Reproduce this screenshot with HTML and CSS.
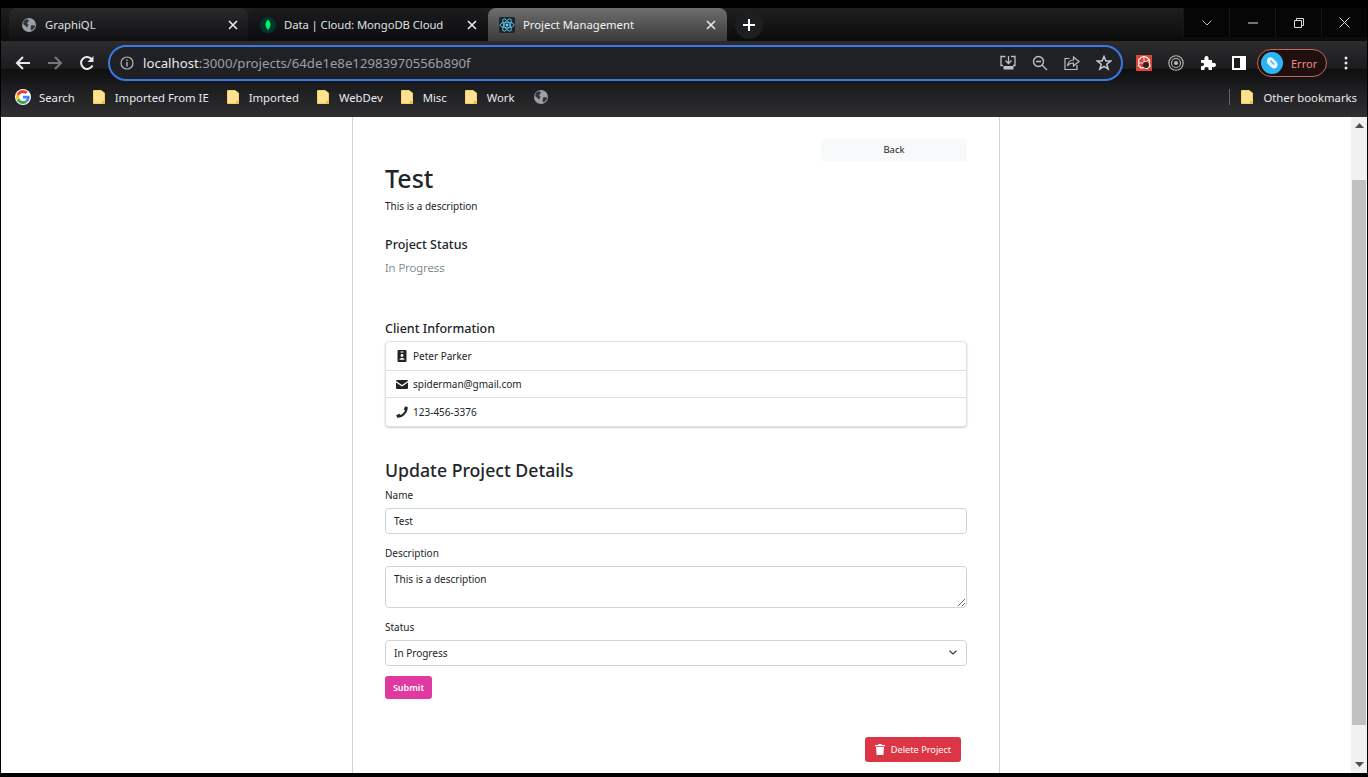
FILE: index.html
```html
<!DOCTYPE html>
<html lang="en">
<head>
	<meta charset="UTF-8" />
	<title>Project Management</title>
	<link rel="stylesheet" href="styles.css">
</head>
<body>
	<svg class="defs" width="0" height="0">
		<symbol id="globe" viewBox="0 0 16 16">
			<circle cx="8" cy="8" r="7" fill="#9aa0a6" />
			<path d="M3 3.500 6.500 2 8 4 6 6 7.500 8 6 10.500 4.500 9 2 7ZM10 8.500l3.500-.5.5 2-3 3.500-1.500-1.500Z" fill="#35363a" />
		</symbol>
		<symbol id="folder" viewBox="0 0 12 14">
			<path d="M.5.500H8L11.500 3v10.500H.5Z" fill="#fde293" stroke="#f9cf5b" />
			<path d="M9 11h2.500v2.500H9Z" fill="#e9b93f" />
		</symbol>
		<symbol id="close" viewBox="0 0 10 10">
			<path d="M1 1 9 9M9 1 1 9" stroke="#e8eaed" stroke-width="1.600" fill="none" />
		</symbol>
	</svg>

	<!-- tab strip -->
	<div class="tabstrip">
		<div class="tab">
			<svg class="favicon"><use href="#globe" /></svg>
			<span class="tab-title">GraphiQL</span>
			<svg class="tab-close"><use href="#close" /></svg>
		</div>
		<div class="tab tab-sep">
			<svg class="favicon" viewBox="0 0 16 16">
				<circle cx="8" cy="8" r="8" fill="#023430" />
				<path d="M8 2.500C10 4.500 11 6.500 10.500 8.500 10 10.500 9 11.500 8.300 12.500L8 14 7.700 12.500C7 11.500 6 10.500 5.500 8.500 5 6.500 6 4.500 8 2.500Z" fill="#00ed64" />
			</svg>
			<span class="tab-title">Data | Cloud: MongoDB Cloud</span>
			<svg class="tab-close"><use href="#close" /></svg>
		</div>
		<div class="tab tab-active">
			<svg class="favicon" viewBox="0 0 16 16">
				<rect width="16" height="16" rx="2" fill="#20232a" />
				<g fill="none" stroke="#61dafb" stroke-width=".8">
					<ellipse cx="8" cy="8" rx="7" ry="2.800" />
					<ellipse cx="8" cy="8" rx="7" ry="2.800" transform="rotate(60 8 8)" />
					<ellipse cx="8" cy="8" rx="7" ry="2.800" transform="rotate(120 8 8)" />
				</g>
				<circle cx="8" cy="8" r="1.400" fill="#61dafb" />
			</svg>
			<span class="tab-title">Project Management</span>
			<svg class="tab-close"><use href="#close" /></svg>
		</div>
		<div class="new-tab">
			<svg width="12" height="12" viewBox="0 0 12 12"><path d="M6 0V12M0 6H12" stroke="#fff" stroke-width="2" /></svg>
		</div>
		<div class="window-btns">
			<div class="window-btn">
				<svg width="10" height="6" viewBox="0 0 10 6"><path d="M.5.500 5 5 9.500.500" fill="none" stroke="#bbb" /></svg>
			</div>
			<div class="window-btn">
				<svg width="10" height="2" viewBox="0 0 10 2"><path d="M0 1H10" stroke="#ddd" /></svg>
			</div>
			<div class="window-btn">
				<svg width="10" height="10" viewBox="0 0 10 10"><path d="M.5 2.500H7.500V9.500H.5ZM2.500 2.500V.5H9.500V7.500H7.500" fill="none" stroke="#ddd" /></svg>
			</div>
			<div class="window-btn">
				<svg width="11" height="11" viewBox="0 0 11 11"><path d="M.5.500 10.500 10.500M10.500.500 .5 10.500" stroke="#ddd" /></svg>
			</div>
		</div>
	</div>

	<!-- toolbar -->
	<div class="toolbar">
		<svg class="nav-icon" viewBox="0 0 16 16"><path d="M15 8H2M8 2 2 8l6 6" fill="none" stroke="#e8eaed" stroke-width="2" /></svg>
		<svg class="nav-icon" viewBox="0 0 16 16"><path d="M1 8H14M8 2l6 6-6 6" fill="none" stroke="#75787c" stroke-width="2" /></svg>
		<svg class="nav-icon" viewBox="0 0 16 16"><path d="M13.500 10.500A6 6 0 1 1 13 4.500" fill="none" stroke="#e8eaed" stroke-width="2" /><path d="M14.500 1V7H8.500Z" fill="#e8eaed" /></svg>
		<div class="omnibox">
			<svg class="info-icon" viewBox="0 0 14 14"><circle cx="7" cy="7" r="6" fill="none" stroke="#b4b6b9" stroke-width="1.200" /><path d="M7 6V10.500M7 3.500V5" stroke="#b4b6b9" stroke-width="1.400" /></svg>
			<span class="url"><b>localhost</b>:3000/projects/64de1e8e12983970556b890f</span>
			<div class="omni-icons">
				<svg class="omni-icon" viewBox="0 0 16 16"><path d="M5.500 1.500H1V10.500H3M11 1.500H15V10.500H13M8.500 1V8.500M5.500 5.500 8.500 8.500 11.500 5.500" fill="none" stroke="#bdc1c6" stroke-width="1.300" /><rect x="3.500" y="11" width="10" height="3.500" fill="#bdc1c6" /></svg>
				<svg class="omni-icon" viewBox="0 0 16 16"><circle cx="6.500" cy="6.500" r="5" fill="none" stroke="#bdc1c6" stroke-width="1.400" /><path d="M10 10 15 15M4 6.500H9" stroke="#bdc1c6" stroke-width="1.400" /></svg>
				<svg class="omni-icon" viewBox="0 0 16 16"><path d="M5.500 3.500H1V14.500H13V10M9.500 2V5C5.500 5 4 7.500 3.500 11 5 8.500 7 8 9.500 8V11L15 6.500Z" fill="none" stroke="#bdc1c6" stroke-width="1.200" /></svg>
				<svg class="omni-icon" viewBox="0 0 16 16"><path d="M8 1.500 9.900 6H14.700L10.800 9.200 12.200 14 8 11.300 3.800 14 5.200 9.200 1.300 6H6.100Z" fill="none" stroke="#c4c7cb" stroke-width="1.500" /></svg>
			</div>
		</div>
		<div class="ext-icons">
			<svg class="ext-icon" viewBox="0 0 16 16">
				<rect width="16" height="16" fill="#d9453a" />
				<path d="M5 2.500 8 1.500 11 2.500 13.500 5 13 8 14 11 11 13.500 8 12.500 5 13 2.500 10.500 3 8 2.500 5Z" fill="none" stroke="#fff" stroke-width="1.200" />
				<path d="M8 1.500V7M3 8H8M13.500 5 8 7" stroke="#fff" stroke-width=".8" />
				<circle cx="10" cy="10" r="3" fill="#35201f" />
			</svg>
			<svg class="ext-icon" viewBox="0 0 16 16"><circle cx="8" cy="8" r="7.200" fill="none" stroke="#bbb" stroke-width="1.100" /><circle cx="8" cy="8" r="4.500" fill="none" stroke="#bbb" stroke-width="1.100" /><circle cx="8" cy="8" r="2" fill="#bbb" /></svg>
			<svg class="ext-icon" viewBox="0 0 16 16"><path d="M1 5H4.500C4 2.500 5 1 6.500 1S9 2.500 8.500 5H12V8C14.500 7.500 16 8.500 16 10S14.500 12.500 12 12V15H8.500C9 13 8 12 6.500 12S4 13 4.500 15H1V11C3 11.500 4 10.500 4 9.500S3 7.500 1 8Z" fill="#fff" /></svg>
			<svg class="ext-icon panel-icon" viewBox="0 0 14 14"><path d="M0 0H14V14H0Z" fill="#fff" /><path d="M2 2H8V12H2Z" fill="#1a1a1c" /></svg>
		</div>
		<div class="profile">
			<svg class="avatar" viewBox="0 0 22 22"><circle cx="11" cy="11" r="11" fill="#2cb5f5" /><path d="M6 8.500C6 6 8.500 4.500 10.500 5.500L12 6.500 15.500 10C17.500 12 16.500 16 13.500 16.500 12 16.700 11 16 10 15L6.500 11.500C6 10.500 6 9.500 6 8.500Z" fill="#eef8fe" /><path d="M9.500 8.500 13 12.500" stroke="#5cb8e6" stroke-width="1.600" /></svg>
			<span class="profile-text">Error</span>
		</div>
		<svg class="menu-icon" width="4" height="14" viewBox="0 0 4 14"><circle cx="2" cy="2" r="1.500" fill="#e8eaed" /><circle cx="2" cy="7" r="1.500" fill="#e8eaed" /><circle cx="2" cy="12" r="1.500" fill="#e8eaed" /></svg>
	</div>

	<!-- bookmarks -->
	<div class="bookmarks">
		<div class="bookmark bookmark-search">
			<svg class="bm-icon" viewBox="0 0 16 16">
				<circle cx="8" cy="8" r="8" fill="#fff" />
				<path d="M14.600 8.200C14.600 7.700 14.500 7.200 14.400 6.800H8V9.400H11.700C11.500 10.200 11 10.900 10.300 11.400L12.500 13.100C13.800 11.900 14.600 10.200 14.600 8.200Z" fill="#4285f4" />
				<path d="M8 15C9.900 15 11.400 14.400 12.500 13.100L10.300 11.400C9.700 11.800 8.900 12.100 8 12.100 6.200 12.100 4.600 10.900 4.100 9.200L1.800 11C2.900 13.400 5.300 15 8 15Z" fill="#34a853" />
				<path d="M4.100 9.200C3.800 8.400 3.800 7.600 4.100 6.800L1.800 5C.9 6.900.9 9.100 1.800 11Z" fill="#fbbc05" />
				<path d="M8 3.900C9 3.900 9.900 4.200 10.600 4.900L12.600 2.900C11.400 1.700 9.800 1 8 1 5.300 1 2.900 2.600 1.800 5L4.100 6.800C4.600 5.100 6.200 3.900 8 3.900Z" fill="#ea4335" />
			</svg>
			<span>Search</span>
		</div>
		<div class="bookmark"><svg class="folder-icon"><use href="#folder" /></svg><span>Imported From IE</span></div>
		<div class="bookmark"><svg class="folder-icon"><use href="#folder" /></svg><span>Imported</span></div>
		<div class="bookmark"><svg class="folder-icon"><use href="#folder" /></svg><span>WebDev</span></div>
		<div class="bookmark"><svg class="folder-icon"><use href="#folder" /></svg><span>Misc</span></div>
		<div class="bookmark"><svg class="folder-icon"><use href="#folder" /></svg><span>Work</span></div>
		<svg class="bm-icon"><use href="#globe" /></svg>
		<div class="bookmark-end">
			<div class="bm-divider"></div>
			<div class="bookmark"><svg class="folder-icon"><use href="#folder" /></svg><span>Other bookmarks</span></div>
		</div>
	</div>

	<!-- page -->
	<div class="viewport">
		<div class="page">
			<main class="column">
				<div class="back-row"><a class="btn-back">Back</a></div>
				<h1 class="title">Test</h1>
				<p class="desc">This is a description</p>
				<h5 class="section-head status-head">Project Status</h5>
				<p class="status">In Progress</p>
				<h5 class="section-head client-head">Client Information</h5>
				<ul class="client-list">
					<li>
						<svg class="li-icon" viewBox="0 0 12 12"><path d="M2.500 0H9.500A1 1 0 0 1 10.500 1V11A1 1 0 0 1 9.500 12H2.500A1 1 0 0 1 1.500 11V1A1 1 0 0 1 2.500 0Z" fill="#212529" /><circle cx="6" cy="5.500" r="1.400" fill="#fff" /><path d="M3.500 9.800C3.500 7.500 8.500 7.500 8.500 9.800ZM4.500 1.500H7.500V2.500H4.500Z" fill="#fff" /></svg>
						<span>Peter Parker</span>
					</li>
					<li>
						<svg class="li-icon" viewBox="0 0 12 12"><path d="M1 2H11A1 1 0 0 1 12 3L6 7 0 3A1 1 0 0 1 1 2ZM0 4.500 6 8.500 12 4.500V10A1 1 0 0 1 11 11H1A1 1 0 0 1 0 10Z" fill="#212529" /></svg>
						<span>spiderman@gmail.com</span>
					</li>
					<li>
						<svg class="li-icon" viewBox="0 0 12 12"><path d="M11.800 1.300 9.200.3 7.800 3.200 9 4.600C8.200 6.500 6.500 8.200 4.600 9L3.200 7.800.3 9.200 1.300 11.800C6.800 12 11.800 7 11.800 1.300Z" fill="#212529" /></svg>
						<span>123-456-3376</span>
					</li>
				</ul>

				<h3 class="form-title">Update Project Details</h3>
				<form>
					<label class="form-label">Name</label>
					<input class="form-input" type="text" value="Test">
					<label class="form-label label-desc">Description</label>
					<textarea class="form-input form-area">This is a description</textarea>
					<label class="form-label label-status">Status</label>
					<div class="select-wrap">
						<select class="form-input form-select">
							<option>In Progress</option>
						</select>
						<svg class="chevron" width="8" height="5" viewBox="0 0 8 5"><path d="M.5.700 4 4 7.500.700" fill="none" stroke="#343a40" stroke-width="1.200" /></svg>
					</div>
					<button class="btn-submit" type="button">Submit</button>
				</form>

				<div class="delete-row">
					<button class="btn-delete" type="button">
						<svg width="10" height="11" viewBox="0 0 10 11"><path d="M3.500 0H6.500L7 1H10V2.200H0V1H3ZM1 3H9L8.400 11H1.600Z" fill="#fff" /></svg>
						Delete Project
					</button>
				</div>
			</main>
		</div>
		<div class="scrollbar">
			<div class="scroll-arrow"><svg width="9" height="5" viewBox="0 0 9 5"><path d="M4.500 0 9 5H0Z" fill="#505050" /></svg></div>
			<div class="scroll-track"><div class="scroll-thumb"></div></div>
			<div class="scroll-arrow"><svg width="9" height="5" viewBox="0 0 9 5"><path d="M0 0H9L4.500 5Z" fill="#505050" /></svg></div>
		</div>
	</div>
</body>
</html>
```

FILE: styles.css
```css
* {
	box-sizing: border-box;
}

html,
body {
	margin: 0;
	height: 777px;
	overflow: hidden;
}

body {
	background-color: #000;
	padding: 8px 1px 4px 1px;
	display: flex;
	flex-direction: column;
	font-family: "Noto Sans", "Open Sans", sans-serif;
	color: #212529;
}

.defs {
	position: absolute;
}

/* tab strip */
.tabstrip {
	height: 33px;
	display: flex;
	align-items: flex-end;
	background: linear-gradient(#1f1f20, #0b0b0b);
	flex-shrink: 0;
}

.tab {
	width: 239px;
	height: 33px;
	display: flex;
	align-items: center;
	padding-left: 12px;
	padding-right: 10px;
	border-radius: 8px 8px 0 0;
	background: linear-gradient(#2a2a2c, #101012);
	color: #dee1e6;
	font-size: 11.300px;
	margin-left: 8px;
}

.tab-sep {
	margin-left: 1px;
	width: 238px;
	padding-left: 11px;
	background: linear-gradient(#1c1c1e, #0c0c0e);
	border-radius: 8px 8px 8px 8px;
}

.tab-sep .tab-title {
	letter-spacing: -.07px;
}

.tab-active {
	margin-left: 1px;
	padding-left: 11px;
	padding-right: 11px;
	background: linear-gradient(#6e6e6e, #3a3a3b);
	color: #f1f3f4;
}

.favicon {
	width: 16px;
	height: 16px;
	flex-shrink: 0;
}

.tab-title {
	flex: 1;
	margin-left: 8px;
	white-space: nowrap;
}

.tab-close {
	width: 10px;
	height: 10px;
	flex-shrink: 0;
}

.new-tab {
	width: 28px;
	height: 28px;
	margin-left: 8px;
	margin-bottom: 2px;
	border-radius: 50%;
	background-color: #1d1e20;
	display: flex;
	align-items: center;
	justify-content: center;
}

.window-btns {
	margin-left: auto;
	display: flex;
	height: 29px;
	align-self: flex-start;
}

.window-btn {
	width: 46px;
	height: 29px;
	background-color: #060606;
	border-left: 1px solid #161616;
	display: flex;
	align-items: center;
	justify-content: center;
}

/* toolbar */
.toolbar {
	height: 42px;
	display: flex;
	align-items: center;
	background: linear-gradient(#2c2c2e, #1c1c1e 66%, #0f0f10 67%, #18181a);
	padding-left: 14px;
	padding-top: 2px;
	flex-shrink: 0;
}

.nav-icon {
	width: 16px;
	height: 16px;
	margin-right: 16px;
	flex-shrink: 0;
}

.omnibox {
	width: 1015px;
	height: 36px;
	margin-left: -3px;
	border: 2px solid #3b78e7;
	border-radius: 18px;
	background-color: #202124;
	display: flex;
	align-items: center;
	padding-left: 10px;
	padding-right: 9px;
}

.info-icon {
	width: 14px;
	height: 14px;
}

.url {
	margin-left: 9px;
	font-size: 13.200px;
	color: #9aa0a6;
	white-space: nowrap;
}

.url b {
	font-weight: 400;
	color: #e8eaed;
}

.omni-icons {
	margin-left: auto;
	display: flex;
	gap: 16px;
}

.omni-icon {
	width: 16px;
	height: 16px;
}

.ext-icons {
	display: flex;
	gap: 16px;
	margin-left: 13px;
	align-items: center;
}

.ext-icon {
	width: 16px;
	height: 16px;
}

.panel-icon {
	width: 14px;
	height: 14px;
}

.profile {
	width: 70px;
	height: 28px;
	margin-left: 11px;
	border: 1px solid #c5675f;
	border-radius: 14px;
	background-color: #1f0f0e;
	display: flex;
	align-items: center;
	padding-left: 3px;
}

.avatar {
	width: 22px;
	height: 22px;
}

.profile-text {
	margin-left: 8px;
	font-size: 11px;
	color: #f28b82;
}

.menu-icon {
	margin-left: 17px;
}

/* bookmarks */
.bookmarks {
	height: 34px;
	display: flex;
	align-items: center;
	background: linear-gradient(#1a1a1c, #2f2f31);
	padding-left: 14px;
	padding-right: 10px;
	padding-bottom: 6px;
	flex-shrink: 0;
	font-size: 11.300px;
	color: #e8eaed;
}

.bookmark {
	display: flex;
	align-items: center;
	margin-right: 18px;
	white-space: nowrap;
}

.bm-icon {
	width: 16px;
	height: 16px;
	flex-shrink: 0;
}

.bookmark-search .bm-icon {
	margin-right: 8px;
}

.folder-icon {
	width: 12px;
	height: 14px;
	margin-right: 10px;
	flex-shrink: 0;
}

.bookmark-end {
	margin-left: auto;
	display: flex;
	align-items: center;
}

.bookmark-end .bookmark {
	margin-right: 0;
}

.bm-divider {
	width: 1px;
	height: 16px;
	background-color: #5f6368;
	margin-right: 11px;
}

/* page */
.viewport {
	flex: 1;
	display: flex;
	min-height: 0;
}

.page {
	flex: 1;
	background-color: #fff;
	min-width: 0;
	padding-left: 351px;
}

.column {
	width: 648px;
	height: 100%;
	border-left: 1px solid #ced4da;
	border-right: 1px solid #ced4da;
	padding: 22px 32px 0 32px;
	background-color: #fff;
}

.back-row {
	display: flex;
	justify-content: flex-end;
}

.btn-back {
	width: 146px;
	height: 22px;
	padding-bottom: 2px;
	border-radius: 3px;
	background-color: #f8f9fa;
	font-size: 9.500px;
	display: flex;
	align-items: center;
	justify-content: center;
}

.title {
	margin: 0;
	font-size: 25px;
	font-weight: 500;
	line-height: 34px;
}

.desc {
	margin: 3px 0 0 0;
	font-size: 10px;
	line-height: 16px;
}

.section-head {
	margin: 0;
	font-size: 12.500px;
	font-weight: 500;
	line-height: 18px;
}

.status-head {
	margin-top: 22px;
}

.status {
	margin: 5px 0 0 0;
	font-size: 11.500px;
	line-height: 18px;
	color: #4f5962;
	font-weight: 300;
}

.client-head {
	margin-top: 43px;
}

.client-list {
	list-style-type: none;
	margin: 3px 0 0 0;
	padding: 0;
	height: 86px;
	border: 1px solid #dee2e6;
	border-radius: 4px;
	box-shadow: 0 1px 2px rgba(0, 0, 0, .2);
	display: flex;
	flex-direction: column;
	font-size: 10px;
}

.client-list li {
	flex: 0 0 28px;
	display: flex;
	align-items: center;
	padding-left: 10px;
	border-bottom: 1px solid #dee2e6;
}

.client-list li:first-child {
	flex-basis: 29px;
}

.client-list li:nth-child(2) {
	flex-basis: 27px;
}

.client-list li:last-child {
	border-bottom: none;
}

.li-icon {
	width: 12px;
	height: 12px;
	margin-right: 5px;
	flex-shrink: 0;
}

.form-title {
	margin: 30px 0 0 0;
	font-size: 17.700px;
	font-weight: 500;
	line-height: 26px;
}

.form-label {
	display: block;
	margin-top: 4px;
	font-size: 10px;
	line-height: 16px;
}

.form-input {
	display: block;
	width: 100%;
	height: 26px;
	margin-top: 5px;
	padding: 0 8px;
	border: 1px solid #ced4da;
	border-radius: 4px;
	background-color: #fff;
	font-family: inherit;
	font-size: 10px;
	color: #212529;
}

.form-area {
	height: 42px;
	padding-top: 5px;
	resize: vertical;
}

.label-desc {
	margin-top: 11px;
}

.label-status {
	margin-top: 11px;
}

.select-wrap {
	position: relative;
}

.form-select {
	appearance: none;
}

.chevron {
	position: absolute;
	right: 10px;
	top: 10px;
}

.btn-submit {
	display: block;
	margin-top: 10px;
	width: 47px;
	height: 23px;
	border: none;
	border-radius: 3px;
	background-color: #e0399f;
	color: #fff;
	font-family: inherit;
	font-size: 9px;
	font-weight: 600;
}

.delete-row {
	margin-top: 38px;
	padding-right: 6px;
	display: flex;
	justify-content: flex-end;
}

.btn-delete {
	width: 96px;
	height: 25px;
	border: none;
	border-radius: 3px;
	background-color: #dc3545;
	color: #fff;
	font-family: inherit;
	font-size: 9.200px;
	display: flex;
	align-items: center;
	justify-content: center;
	gap: 6px;
}

/* scrollbar */
.scrollbar {
	width: 16px;
	background-color: #f1f1f1;
	display: flex;
	flex-direction: column;
	flex-shrink: 0;
}

.scroll-arrow {
	height: 17px;
	display: flex;
	align-items: center;
	justify-content: center;
	flex-shrink: 0;
}

.scroll-track {
	flex: 1;
	padding: 46px 1px 31px 1px;
}

.scroll-thumb {
	height: 100%;
	background-color: #c1c1c1;
}
```
